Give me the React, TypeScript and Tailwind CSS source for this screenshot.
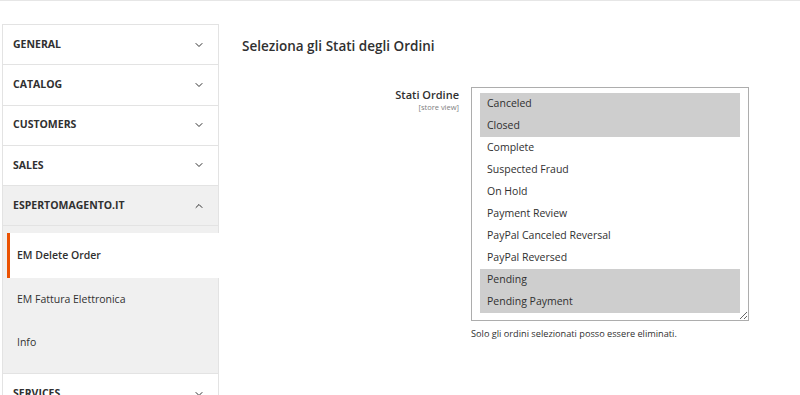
import { ChevronDown, ChevronUp } from 'lucide-react'

const sections = ['GENERAL', 'CATALOG', 'CUSTOMERS', 'SALES']

const statuses = [
  { label: 'Canceled', selected: true },
  { label: 'Closed', selected: true },
  { label: 'Complete', selected: false },
  { label: 'Suspected Fraud', selected: false },
  { label: 'On Hold', selected: false },
  { label: 'Payment Review', selected: false },
  { label: 'PayPal Canceled Reversal', selected: false },
  { label: 'PayPal Reversed', selected: false },
  { label: 'Pending', selected: true },
  { label: 'Pending Payment', selected: true },
]

export default function App() {
  return (
    <div className="h-[395px] w-[800px] overflow-hidden border-t border-[#e6e6e6] bg-white font-['Open_Sans',sans-serif] text-[#303030]">
      <div className="flex pt-[23px]">

        {/* Sidebar */}
        <div className="ml-[2px] w-[217px] shrink-0">
          <div className="border border-b-0 border-[#e3e3e3]">
            {sections.map((s) => (
              <div key={s} className="flex h-[40.25px] items-center justify-between border-b border-[#e3e3e3] pl-[10px] pr-[13px]">
                <span className="text-[10.5px] font-bold">{s}</span>
                <ChevronDown size={12} strokeWidth={2} className="text-[#303030]" />
              </div>
            ))}
            <div className="flex h-[40px] items-center justify-between border-b border-[#e3e3e3] bg-[#f0f0f0] pl-[10px] pr-[13px]">
              <span className="text-[10.5px] font-bold">ESPERTOMAGENTO.IT</span>
              <ChevronUp size={12} strokeWidth={2} className="text-[#303030]" />
            </div>
          </div>

          {/* Submenu */}
          <div className="border-x border-b border-[#e3e3e3] bg-[#f0f0f0] pt-[7px] pb-[9px]">
            <div className="relative -mr-[20px] ml-[4px] flex h-[45px] items-center border-l-[3px] border-[#eb5202] bg-white pl-[7px]">
              <span className="text-[10.5px] font-semibold">EM Delete Order</span>
            </div>
            <div className="flex h-[43px] items-center pl-[14px] text-[10.5px]">EM Fattura Elettronica</div>
            <div className="flex h-[43px] items-center pl-[14px] text-[10.5px]">Info</div>
          </div>

          <div className="flex h-[40px] items-center justify-between border-x border-[#e3e3e3] pl-[10px] pr-[13px]">
            <span className="text-[10.5px] font-bold">SERVICES</span>
            <ChevronDown size={12} strokeWidth={2} className="text-[#303030]" />
          </div>
        </div>

        {/* Content */}
        <div className="flex-1 pl-[23px]">
          <h2 className="mt-[12px] text-[13.5px] font-semibold text-[#303030]">Seleziona gli Stati degli Ordini</h2>

          <div className="mt-[31px] flex">
            <div className="w-[229px] pr-[12px] text-right">
              <div className="text-[11px] font-semibold leading-[15px]">Stati Ordine</div>
              <div className="text-[7.5px] leading-[10px] text-[#808080]">[store view]</div>
            </div>
            <div>
              <div className="h-[234px] w-[278px] resize overflow-hidden border border-[#adadad] px-[8px] pt-[5px]">
                {statuses.map((o) => (
                  <div
                    key={o.label}
                    className={`flex h-[22px] items-center pl-[7px] text-[10.5px] ${o.selected ? 'bg-[#cecece]' : ''}`}
                  >
                    {o.label}
                  </div>
                ))}
              </div>
              <p className="mt-[6px] text-[9.2px] text-[#303030]">Solo gli ordini selezionati posso essere eliminati.</p>
            </div>
          </div>
        </div>

      </div>
    </div>
  )
}
